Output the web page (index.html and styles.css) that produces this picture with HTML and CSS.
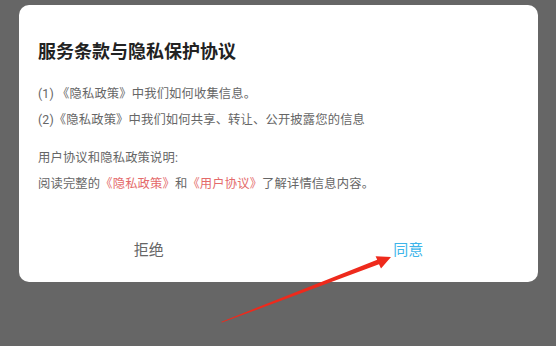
FILE: index.html
```html
<!DOCTYPE html>
<html lang="zh-CN">
<head>
<meta charset="utf-8">
<link rel="stylesheet" href="styles.css">
</head>
<body>
<div class="page">
  <div class="dialog">
    <h1 class="title">服务条款与隐私保护协议</h1>
    <div class="group">
      <p class="line">(1) 《隐私政策》中我们如何收集信息。</p>
      <p class="line">(2)《隐私政策》中我们如何共享、转让、公开披露您的信息</p>
    </div>
    <div class="group second">
      <p class="line">用户协议和隐私政策说明:</p>
      <p class="line">阅读完整的<span class="link">《隐私政策》</span>和<span class="link">《用户协议》</span>了解详情信息内容。</p>
    </div>
    <div class="actions">
      <div class="btn reject">拒绝</div>
      <div class="btn agree">同意</div>
    </div>
  </div>
  <svg class="arrow" width="556" height="346" viewBox="0 0 556 346">
    <polygon fill="#ee2a1c" points="221,322 377.2,259.8 375.6,256.2 391,257 381,268.6 379,264.2 222,322.6"/>
  </svg>
</div>
</body>
</html>
```
FILE: styles.css
```css
html, body {
  margin: 0;
  padding: 0;
  background: #666666;
}
body {
  width: 556px;
  height: 346px;
  overflow: hidden;
  font-family: Roboto, "Noto Sans CJK SC", sans-serif;
}
.page {
  position: relative;
  width: 556px;
  height: 346px;
  padding: 5px 0 0 19px;
  box-sizing: border-box;
}
.dialog {
  width: 519px;
  height: 277px;
  background: #ffffff;
  border-radius: 10px;
  box-sizing: border-box;
  padding: 35px 19px 0 19px;
  display: flex;
  flex-direction: column;
}
.title {
  margin: 0;
  font-size: 18px;
  line-height: 24px;
  font-weight: 700;
  color: #222222;
}
.group {
  margin-top: 17px;
}
.group.second {
  margin-top: 12px;
}
.line {
  margin: 0;
  font-size: 12.3px;
  line-height: 26px;
  letter-spacing: 0.15px;
  color: #666666;
  white-space: nowrap;
}
.link {
  color: #e46a6a;
}
.actions {
  margin: 31px -19px 0 -19px;
  display: flex;
  height: 40px;
}
.btn {
  flex: 1;
  display: flex;
  align-items: center;
  justify-content: center;
  font-size: 15px;
}
.reject {
  color: #666666;
}
.agree {
  color: #3db5ea;
}
.arrow {
  position: absolute;
  left: 0;
  top: 0;
  pointer-events: none;
}
```
